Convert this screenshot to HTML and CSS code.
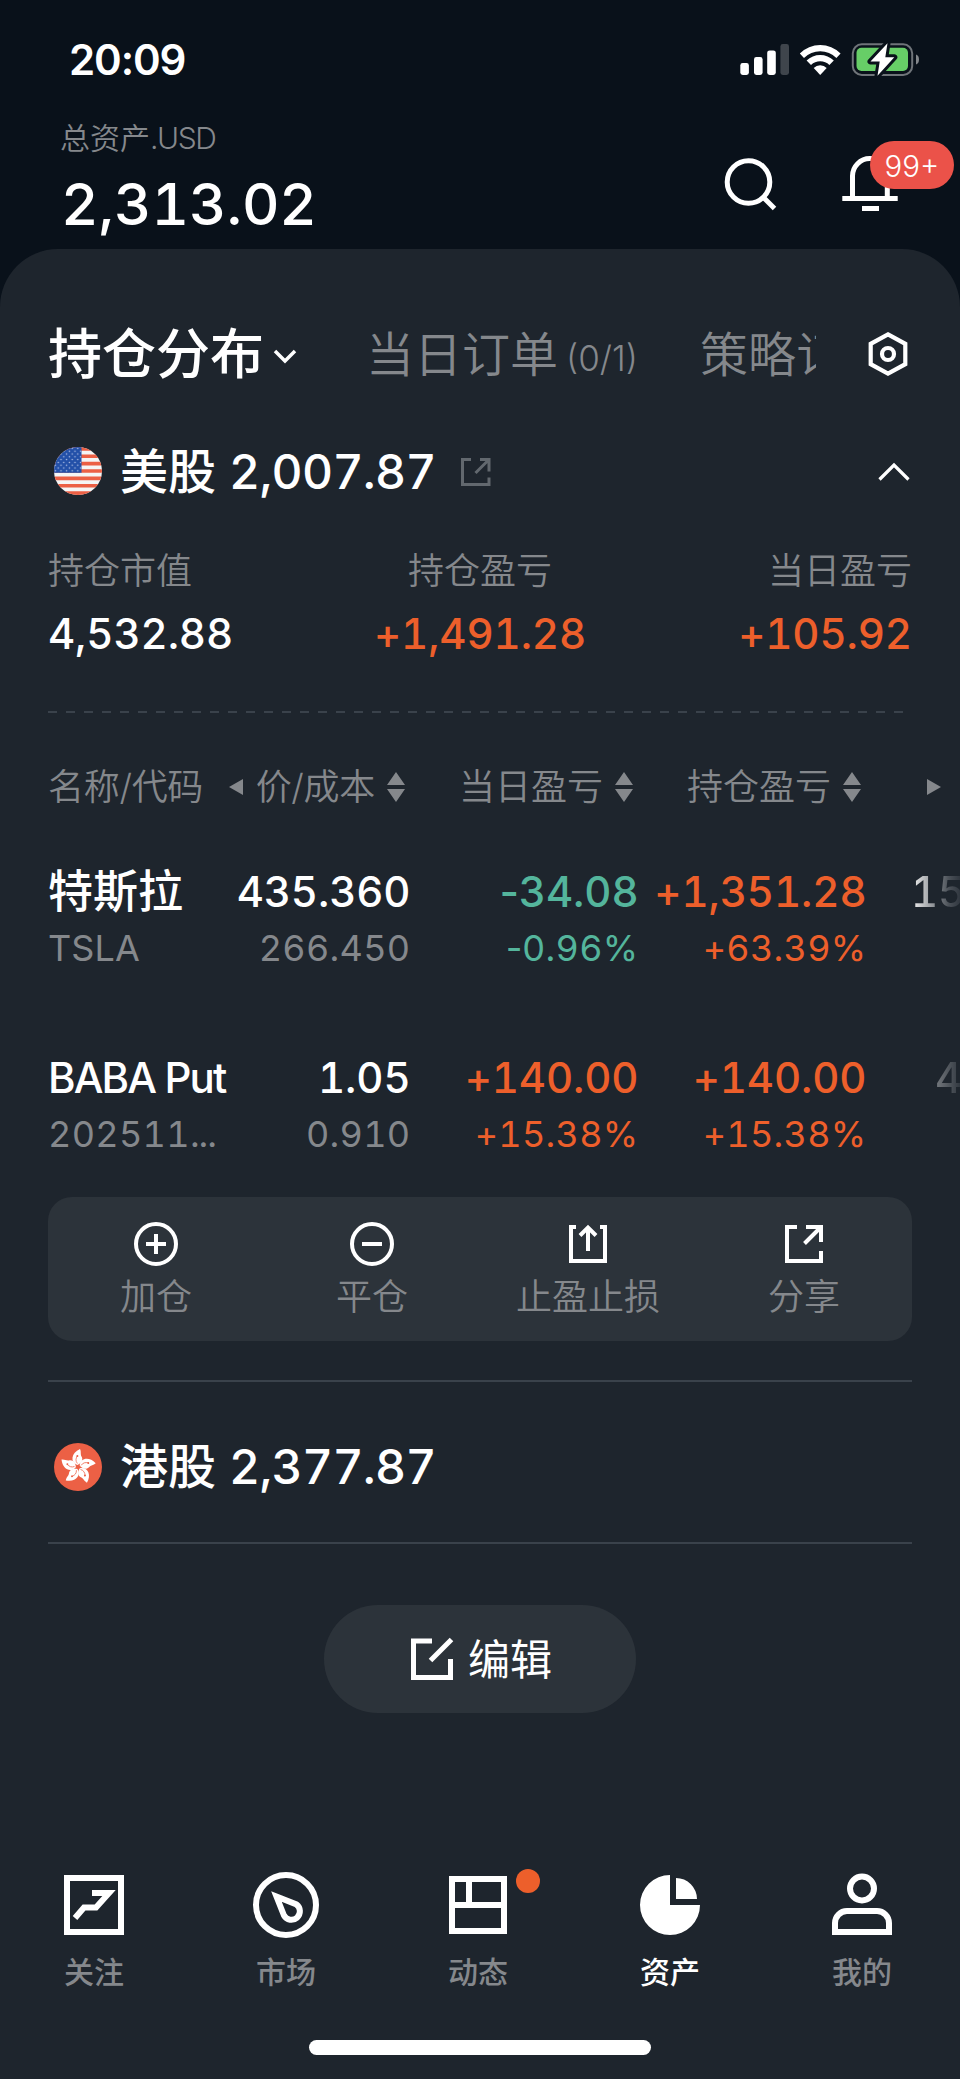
FILE: index.html
```html
<!DOCTYPE html>
<html lang="zh-CN">
<head>
<meta charset="utf-8">
<title>资产</title>
<link rel="stylesheet" href="styles.css">
</head>
<body>
<div class="app">
  <div class="status">
    <span class="time">20:09</span>
    <svg class="status-icons" width="182" height="36" viewBox="738 41 182 36">
      <g fill="#fff">
        <rect x="740.3" y="63" width="8.6" height="12" rx="2.4"/>
        <rect x="754" y="57" width="8.6" height="18" rx="2.4"/>
        <rect x="767.2" y="50.4" width="8.6" height="24.6" rx="2.4"/>
        <rect x="780.4" y="44" width="8.6" height="31" rx="2.4" opacity=".22"/>
        <path d="M799.8 53.4a29 29 0 0 1 40.8 0l-4.2 4.6a23 23 0 0 0-32.400 0z"/>
        <path d="M806.6 60.600a19.500 19.500 0 0 1 27.200 0l-4.400 4.500a13.200 13.200 0 0 0-18.400 0z"/>
        <path d="M813.700 68a9.200 9.200 0 0 1 13 0l-6.500 7z"/>
      </g>
      <rect x="852.800" y="44.300" width="59.400" height="30.600" rx="9" fill="none" stroke="#6f7479" stroke-width="2"/>
      <path d="M916 54.500c2 .5 3 2.500 3 5s-1 4.500-3 5z" fill="#84888c"/>
      <rect x="856.500" y="47.800" width="51.500" height="23.200" rx="5" fill="#67ce67"/>
      <path d="M887.500 43.300 870.500 61.600H879.700L877.500 75.700 894.300 57.300H885.300Z" fill="#fff" stroke="#09111a" stroke-width="6" stroke-linejoin="round"/>
      <path d="M887.500 43.300 870.500 61.600H879.700L877.500 75.700 894.300 57.300H885.300Z" fill="#fff"/>
    </svg>
  </div>

  <header class="header">
    <div class="total">
      <div class="total-label">总资产<span class="unit">.USD</span></div>
      <div class="total-value">2,313.02</div>
    </div>
    <div class="header-actions">
      <svg width="54" height="56" viewBox="724 156 54 56" fill="none" stroke="#fff" stroke-width="5">
        <circle cx="748.500" cy="182" r="21.300"/><path d="M763.500 197.500 774.500 208.500"/>
      </svg>
      <div class="bell">
        <svg width="56" height="56" viewBox="842 156 56 56" fill="none" stroke="#fff" stroke-width="5">
          <path d="M852.500 198V176a17.400 17.400 0 0 1 34.800 0v22M842.300 198.500H897.700M862 208.500H879"/>
        </svg>
        <span class="badge">99+</span>
      </div>
    </div>
  </header>

  <main class="sheet">
    <div class="tabs">
      <div class="tab-strip">
        <span class="tab active">持仓分布</span>
        <svg class="tab-caret" width="24" height="16" viewBox="0 0 24 16" fill="none" stroke="#fff" stroke-width="3.500"><path d="M2 3 12 13 22 3"/></svg>
        <span class="tab">当日订单</span><span class="tab-count">(0/1)</span>
        <span class="tab last">策略订单</span>
      </div>
      <svg width="42" height="46" viewBox="0 0 42 46" fill="none" stroke="#fff" stroke-width="4.200">
        <path d="M21 3.300 38.300 12.800V33.200L21 42.700 3.700 33.200V12.800Z"/><circle cx="21" cy="23" r="6"/>
      </svg>
    </div>

    <section class="market">
      <svg class="flag" width="48" height="48" viewBox="0 0 48 48">
        <defs>
          <clipPath id="disc"><circle cx="24" cy="24" r="24"/></clipPath>
          <pattern id="stars" width="5.600" height="5.600" patternUnits="userSpaceOnUse">
            <circle cx="1.400" cy="1.400" r=".75" fill="#b9c7e8"/><circle cx="4.200" cy="4.200" r=".75" fill="#b9c7e8"/>
          </pattern>
        </defs>
        <g clip-path="url(#disc)">
          <rect width="48" height="48" fill="#f5f5f5"/>
          <path d="M0 1.850H48M0 9.230H48M0 16.620H48M0 24H48M0 31.380H48M0 38.770H48M0 46.150H48" stroke="#ec6045" stroke-width="3.690"/>
          <rect width="27.500" height="25.800" fill="#2350a8"/><rect width="27.500" height="25.800" fill="url(#stars)"/>
        </g>
      </svg>
      <h2 class="market-name">美股</h2><span class="market-sum">2,007.87</span>
      <svg class="open" width="32" height="30" viewBox="0 0 32 30" fill="none" stroke="#62686e" stroke-width="3">
        <path d="M11 2.500H2.500V27.500H29V20.500M20 2.500H29V14.500M28.500 3 15.500 16"/>
      </svg>
      <svg class="fold" width="34" height="20" viewBox="0 0 34 20" fill="none" stroke="#fff" stroke-width="3.200"><path d="M2.500 17.500 17 3 31.500 17.500"/></svg>
    </section>

    <div class="stats">
      <div class="stat"><div class="stat-label">持仓市值</div><div class="stat-value">4,532.88</div></div>
      <div class="stat mid"><div class="stat-label">持仓盈亏</div><div class="stat-value up">+1,491.28</div></div>
      <div class="stat end"><div class="stat-label">当日盈亏</div><div class="stat-value up">+105.92</div></div>
    </div>
    <div class="dashes"></div>

    <div class="grid thead">
      <span class="th-name">名称/代码</span>
      <span class="th"><i class="arrow-left"></i><span class="th-name">价/成本</span><svg class="sort" width="18" height="30" viewBox="0 0 18 30"><path d="M9 0 18 13H0ZM9 30 0 17H18Z"/></svg></span>
      <span class="th">当日盈亏<svg class="sort" width="18" height="30" viewBox="0 0 18 30"><path d="M9 0 18 13H0ZM9 30 0 17H18Z"/></svg></span>
      <span class="th">持仓盈亏<svg class="sort" width="18" height="30" viewBox="0 0 18 30"><path d="M9 0 18 13H0ZM9 30 0 17H18Z"/></svg></span>
      <span class="more"><i class="arrow-right"></i></span>
    </div>

    <div class="grid row">
      <div class="cell name"><b class="cjk">特斯拉</b><small class="ticker">TSLA</small></div>
      <div class="cell"><b>435.360</b><small>266.450</small></div>
      <div class="cell down"><b><span class="minus">-</span>34.08</b><small><span class="minus">-</span>0.96%</small></div>
      <div class="cell up"><b>+1,351.28</b><small>+63.39%</small></div>
      <div class="cell peek"><b>15</b></div>
    </div>
    <div class="grid row">
      <div class="cell name"><b class="latin">BABA Put</b><small class="code">202511<span class="dots">...</span></small></div>
      <div class="cell"><b>1.05</b><small>0.910</small></div>
      <div class="cell up"><b>+140.00</b><small>+15.38%</small></div>
      <div class="cell up"><b>+140.00</b><small>+15.38%</small></div>
      <div class="cell peek second"><b>4</b></div>
    </div>

    <div class="actions">
      <div class="action"><svg width="46" height="46" viewBox="0 0 46 46"><circle cx="23" cy="23" r="20"/><path d="M13 23H33M23 13V33"/></svg><span>加仓</span></div>
      <div class="action"><svg width="46" height="46" viewBox="0 0 46 46"><circle cx="23" cy="23" r="20"/><path d="M13 23H33"/></svg><span>平仓</span></div>
      <div class="action"><svg width="46" height="46" viewBox="0 0 46 46"><path d="M11 6H6V40H40V6H35M23 30V7M15 14.500 23 6.500 31 14.500"/></svg><span>止盈止损</span></div>
      <div class="action"><svg width="46" height="46" viewBox="0 0 46 46"><path d="M16 6H6V40H40V30M25 6H40V21M39.500 6.500 23.500 22.500"/></svg><span>分享</span></div>
    </div>

    <section class="market hk">
      <svg class="flag" width="48" height="48" viewBox="-24 -24 48 48">
        <circle r="24" fill="#ec6045"/>
        <defs><g id="petal">
          <path d="M-.8-2C-8-5-7-14 2-18C3.500-15 2-13 3.800-10C5.500-6.500 2.500-3-.8-2Z" fill="#fff"/>
          <path d="M-.6-3.500C-2.600-6-2.300-8.500-.8-11" fill="none" stroke="#ec6045" stroke-width=".7"/><circle cx="-.6" cy="-11" r="1" fill="#ec6045"/>
        </g></defs>
        <use href="#petal"/><use href="#petal" transform="rotate(72)"/><use href="#petal" transform="rotate(144)"/><use href="#petal" transform="rotate(216)"/><use href="#petal" transform="rotate(288)"/>
      </svg>
      <h2 class="market-name">港股</h2><span class="market-sum">2,377.87</span>
    </section>

    <button class="edit">
      <svg width="44" height="44" viewBox="0 0 44 44" fill="none" stroke="#fff" stroke-width="5"><path d="M22 4H3.500V40.500H40.500V22M41.500 2.500 20.500 23.500"/></svg>
      <span>编辑</span>
    </button>
  </main>

  <nav class="nav">
    <div class="nav-item"><svg width="68" height="68" viewBox="0 0 68 68"><path d="M7 7H61V61H7ZM15 47 24 36.500H36L49 22H32"/></svg><span>关注</span></div>
    <div class="nav-item"><svg width="68" height="68" viewBox="0 0 68 68"><circle cx="34" cy="34" r="30"/><path d="M24.500 25.500 44.500 33.500A8.500 8.500 0 1 1 32 44.500Z"/></svg><span>市场</span></div>
    <div class="nav-item"><svg width="68" height="68" viewBox="0 0 68 68"><path d="M8 8H60V60H8ZM8 34H60M25 8V34"/></svg><span>动态</span><i class="dot"></i></div>
    <div class="nav-item current"><svg width="68" height="68" viewBox="0 0 68 68"><path class="solid" d="M34 4V34H64A30 30 0 1 1 34 4ZM40 7A21 21 0 0 1 61 28H40Z"/></svg><span>资产</span></div>
    <div class="nav-item"><svg width="68" height="68" viewBox="0 0 68 68"><circle cx="34" cy="17.500" r="12"/><path d="M7 61V52A12 12 0 0 1 19 40H49A12 12 0 0 1 61 52V61Z"/></svg><span>我的</span></div>
  </nav>
  <div class="home"></div>
</div>
</body>
</html>
```

FILE: styles.css
```css
* { box-sizing: border-box; margin: 0; padding: 0; }

body {
  background: #09111a;
  color: #fff;
  font-family: Inter, "Noto Sans CJK SC", sans-serif;
}

svg { display: block; flex: none; }

.app { width: 960px; height: 2079px; overflow: hidden; display: flex; flex-direction: column; }

.status { height: 118px; flex: none; display: flex; justify-content: space-between; padding: 0 40px 0 69px; }
.time { font-size: 42px; font-weight: 600; line-height: 50px; padding-top: 35px; letter-spacing: -1.1px; }
.status-icons { margin-top: 41px; }

.header { height: 131px; flex: none; display: flex; justify-content: space-between; padding: 0 62px 0 60px; }
.total-label { font-size: 30px; line-height: 40px; font-weight: 350; color: #85888c; }
.unit { letter-spacing: -1.4px; }
.total-value { font-size: 58px; line-height: 70px; font-weight: 480; margin: 11px 0 0 1px; letter-spacing: -0.1px; font-variant-numeric: tabular-nums; }
.header-actions { display: flex; gap: 64px; padding-top: 38px; }
.bell { position: relative; }
.badge {
  position: absolute; left: 28px; top: -15px; width: 84px; height: 48px; border-radius: 24px;
  background: #eb5249; font-size: 29.5px; line-height: 50px; font-weight: 300; text-align: center;
}

.sheet { background: #1e252d; border-radius: 58px 58px 0 0; flex: none; height: 1606px; padding: 0 48px; }

.tabs { height: 138px; padding-top: 72px; display: flex; justify-content: space-between; align-items: center; padding-right: 3px; }
.tab-strip { width: 768px; height: 66px; display: flex; align-items: center; overflow: hidden; white-space: nowrap; }
.tab { font-size: 48px; line-height: 62px; padding-top: 1px; font-weight: 350; color: #85888c; flex: none; }
.tab.active { font-size: 54px; font-weight: 500; color: #fff; padding-top: 2px; }
.tab-caret { margin: 3px 69px 0 9px; }
.tab-count { font-size: 35px; font-weight: 350; color: #85888c; padding: 8px 0 0 8px; width: 142px; flex: none; }

.market { display: flex; align-items: center; height: 60px; margin-top: 54px; padding-left: 6px; }
.market-name { font-size: 48px; line-height: 60px; font-weight: 500; margin-left: 18px; padding-top: 1px; }
.market-sum { font-size: 48px; line-height: 60px; font-weight: 480; margin-left: 13px; padding-top: 1px; width: 207px; white-space: nowrap; letter-spacing: -0.7px; font-variant-numeric: tabular-nums; }
.open { margin: 1px 0 0 24px; }
.fold { margin: 1px 1px 0 auto; }

.stats { display: grid; grid-template-columns: repeat(3, 1fr); margin-top: 44px; height: 110px; }
.stat-label { font-size: 36px; line-height: 52px; font-weight: 350; color: #85888c; }
.stat-value { font-size: 42px; line-height: 50px; font-weight: 480; margin-top: 12px; letter-spacing: -0.1px; font-variant-numeric: tabular-nums; }
.mid { text-align: center; }
.end { text-align: right; }
.up { color: #ed5f2b; }
.down { color: #54b59c; }

.dashes { height: 2px; margin: 56px 0 48px; width: 864px; background: repeating-linear-gradient(90deg, #3a424b 0 9px, transparent 9px 18px); }

.grid { display: grid; grid-template-columns: 180px 182px 228px 228px 94px; margin-right: -48px; }
.thead { height: 52px; font-size: 36px; line-height: 52px; font-weight: 350; color: #85888c; }
.thead span { white-space: nowrap; }
.th-name { letter-spacing: -0.3px; }
.th { display: flex; align-items: center; justify-content: flex-end; padding-right: 5px; }
.sort { fill: #85888c; margin-left: 12px; }
.arrow-left { border: 8px solid transparent; border-right: 14px solid #85888c; border-left: 0; margin-right: 13px; }
.arrow-right { border: 8px solid transparent; border-left: 14px solid #85888c; border-right: 0; }
.more { display: flex; align-items: center; padding-left: 61px; }

.row { height: 186px; padding-top: 53px; }
.cell { display: flex; flex-direction: column; align-items: flex-end; white-space: nowrap; margin-right: -0.5px; font-variant-numeric: tabular-nums; }
.cell b { font-size: 42px; line-height: 52px; font-weight: 480; letter-spacing: -0.1px; }
.cell small { font-size: 36px; line-height: 44px; font-weight: 400; margin-top: 8px; letter-spacing: 0.3px; }
.minus { letter-spacing: -4px; }
.dots { letter-spacing: -1px; }
.cell.name { align-items: flex-start; }
.cell.name .cjk { font-size: 45px; letter-spacing: 0; font-weight: 500; }
.cell.name .latin { letter-spacing: -1.9px; }
.cell.name .ticker { letter-spacing: 0.1px; }
.cell:not(.up):not(.down) small { color: #85888c; }
.peek { align-items: flex-start; padding-left: 45px; }
.peek b { background: linear-gradient(90deg, #f4f4f4, #4b5158 70%, #252c35); -webkit-background-clip: text; background-clip: text; color: transparent; }
.peek.second { padding-left: 69px; }
.peek.second b { background-image: linear-gradient(90deg, #777b80, #2c333b); }

.actions { display: grid; grid-template-columns: repeat(4, 1fr); height: 144px; margin-top: 12px; border-radius: 24px; background: #2c333a; }
.action { display: flex; flex-direction: column; align-items: center; padding-top: 24px; font-size: 36px; line-height: 52px; font-weight: 350; color: #85888c; }
.action svg { fill: none; stroke: #fff; stroke-width: 4; }
.action span { margin-top: 4px; }

.hk { height: 164px; margin-top: 39px; border: solid #3a424b; border-width: 2px 0; padding-top: 9px; }

.edit {
  width: 312px; height: 108px; margin: 61px auto 0; border: 0; border-radius: 54px; background: #2c333a; color: #fff;
  display: flex; align-items: center; justify-content: center; gap: 14px; padding-left: 2px; font: 400 42px/60px Inter, "Noto Sans CJK SC", sans-serif;
}
.edit span { padding-top: 1px; }

.nav { flex: none; height: 185px; padding-top: 16px; background: #1e252d; display: flex; }
.nav-item { position: relative; width: 192px; flex: none; display: flex; flex-direction: column; align-items: center; font-size: 30px; line-height: 44px; font-weight: 450; color: #85888c; }
.nav-item:first-child { margin-left: -2px; }
.nav-item svg { fill: none; stroke: #fff; stroke-width: 6; }
.nav-item .solid { fill: #fff; stroke: none; }
.nav-item span { margin-top: 11px; }
.current { color: #fff; }
.dot { position: absolute; left: 134px; top: -2px; width: 24px; height: 24px; border-radius: 50%; background: #ed5f2b; }

.home { flex: none; height: 39px; background: #1e252d; }
.home::before { content: ""; display: block; width: 342px; height: 15px; border-radius: 8px; background: #fff; margin: 0 auto; }
```
